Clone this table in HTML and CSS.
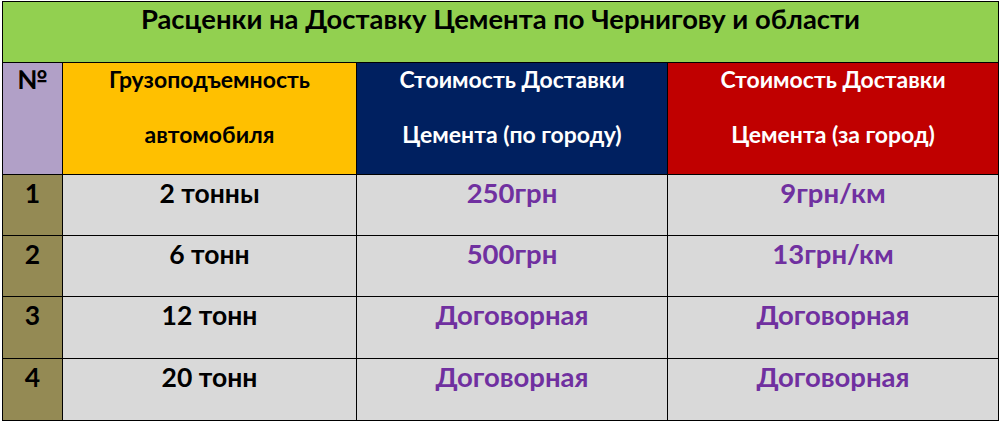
FILE: index.html
```html
<!DOCTYPE html>
<html lang="ru">
<head>
<meta charset="utf-8">
<title>Расценки на Доставку Цемента</title>
<link rel="stylesheet" href="styles.css">
</head>
<body>
<div class="table">
  <div class="cell title">Расценки на Доставку Цемента по Чернигову и области</div>

  <div class="cell head num-head"><span class="line">№</span></div>
  <div class="cell head yellow"><span class="line">Грузоподъемность</span><span class="line second">автомобиля</span></div>
  <div class="cell head navy"><span class="line">Стоимость Доставки</span><span class="line second">Цемента (по городу)</span></div>
  <div class="cell head red"><span class="line">Стоимость Доставки</span><span class="line second">Цемента (за город)</span></div>

  <div class="cell idx">1</div>
  <div class="cell data">2 тонны</div>
  <div class="cell data price">250грн</div>
  <div class="cell data price">9грн/км</div>

  <div class="cell idx">2</div>
  <div class="cell data">6 тонн</div>
  <div class="cell data price">500грн</div>
  <div class="cell data price">13грн/км</div>

  <div class="cell idx">3</div>
  <div class="cell data">12 тонн</div>
  <div class="cell data price">Договорная</div>
  <div class="cell data price">Договорная</div>

  <div class="cell idx">4</div>
  <div class="cell data">20 тонн</div>
  <div class="cell data price">Договорная</div>
  <div class="cell data price">Договорная</div>
</div>
</body>
</html>
```

FILE: styles.css
```css
html, body {
  margin: 0;
  padding: 0;
  background: #ffffff;
}

body {
  padding: 1px 0 0 2px;
  font-family: Lato, "Open Sans", "Liberation Sans", sans-serif;
  font-weight: 700;
}

.table {
  display: grid;
  width: 997px;
  box-sizing: border-box;
  grid-template-columns: 59px 293px 310px 330px;
  grid-template-rows: 60px 111px 60px 60px 61px 61px;
  gap: 1px;
  padding: 1px;
  background: #000000;
}

.cell {
  text-align: center;
  font-size: 26.5px;
  line-height: 36px;
  color: #000000;
  overflow: hidden;
  white-space: nowrap;
}

.title {
  grid-column: 1 / -1;
  background: #92d050;
  font-size: 27.4px;
  line-height: 34px;
}

.head {
  display: flex;
  flex-direction: column;
  align-items: center;
  font-size: 23px;
  line-height: 32px;
}

.head .second {
  margin-top: 23px;
}

.num-head {
  background: #b1a0c7;
  font-size: 26px;
}

.yellow { background: #ffc000; }
.navy { background: #002060; color: #ffffff; }
.red { background: #c00000; color: #ffffff; }

.idx {
  background: #948a54;
}

.data {
  background: #d9d9d9;
}

.price {
  color: #7030a0;
  font-size: 27.5px;
}
```
